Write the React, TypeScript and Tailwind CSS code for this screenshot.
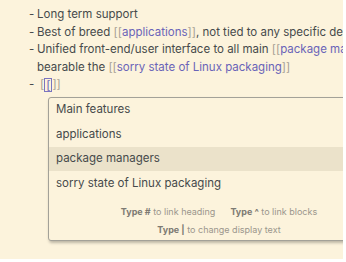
import React from "react";

const Link = ({ children }: { children: React.ReactNode }) => (
  <>
    <span className="text-[#a49e92]">[[</span>
    <span className="text-[#6a64b8]">{children}</span>
    <span className="text-[#a49e92]">]]</span>
  </>
);

const items = ["Main features", "applications", "package managers", "sorry state of Linux packaging"];

export default function App() {
  return (
    <div className="w-[346px] h-[262px] bg-white overflow-hidden" style={{ fontFamily: "Inter, 'Noto Sans', sans-serif" }}>
      <div className="w-[343px] h-[259px] bg-[#fcf3dc] overflow-hidden text-[11.5px] leading-[17.5px] text-[#464a4b] pt-[6px]">
        <div className="flex whitespace-nowrap pl-[29px] overflow-hidden">
          <span className="w-[8px] shrink-0">-</span>
          <span>Long term support</span>
        </div>
        <div className="flex whitespace-nowrap pl-[29px] overflow-hidden">
          <span className="w-[8px] shrink-0">-</span>
          <span>Best of breed <Link>applications</Link>, not tied to any specific desktop</span>
        </div>
        <div className="flex whitespace-nowrap pl-[29px] overflow-hidden">
          <span className="w-[8px] shrink-0">-</span>
          <div>
            <div>Unified front-end/user interface to all main <Link>package managers</Link></div>
            <div>bearable the <Link>sorry state of Linux packaging</Link></div>
          </div>
        </div>
        <div className="flex whitespace-nowrap pl-[29px]">
          <span className="w-[11px] shrink-0">-</span>
          <span className="text-[#a49e92]">[</span>
          <span className="inline-flex items-center">
            <span className="border border-[#7a74c0] leading-[12px] h-[14px] px-[1px] text-[#6a64b8]">[</span>
          </span>
          <span className="text-[#a49e92]">]]</span>
        </div>
        <div className="ml-[48px] mt-[3px] w-[342px] border border-[#a3a198] rounded-[3px] bg-[#fcf3dc] shadow-[1px_2px_3px_rgba(0,0,0,0.25)]">
          <div>
            {items.map((t, i) => (
              <div
                key={t}
                className={`h-[24.5px] flex items-center pl-[7px] ${i === 2 ? "bg-[#ebe2ca]" : ""}`}
              >
                {t}
              </div>
            ))}
          </div>
          <div className="pt-[7px] pb-[1px] text-[9px] leading-[18px] text-[#9b968c] flex flex-col items-center">
            <div className="flex gap-[15px]">
              <span><b className="text-[#7d7a73]">Type #</b> to link heading</span>
              <span><b className="text-[#7d7a73]">Type ^</b> to link blocks</span>
            </div>
            <div>
              <b className="text-[#7d7a73]">Type |</b> to change display text
            </div>
          </div>
        </div>
      </div>
    </div>
  );
}
